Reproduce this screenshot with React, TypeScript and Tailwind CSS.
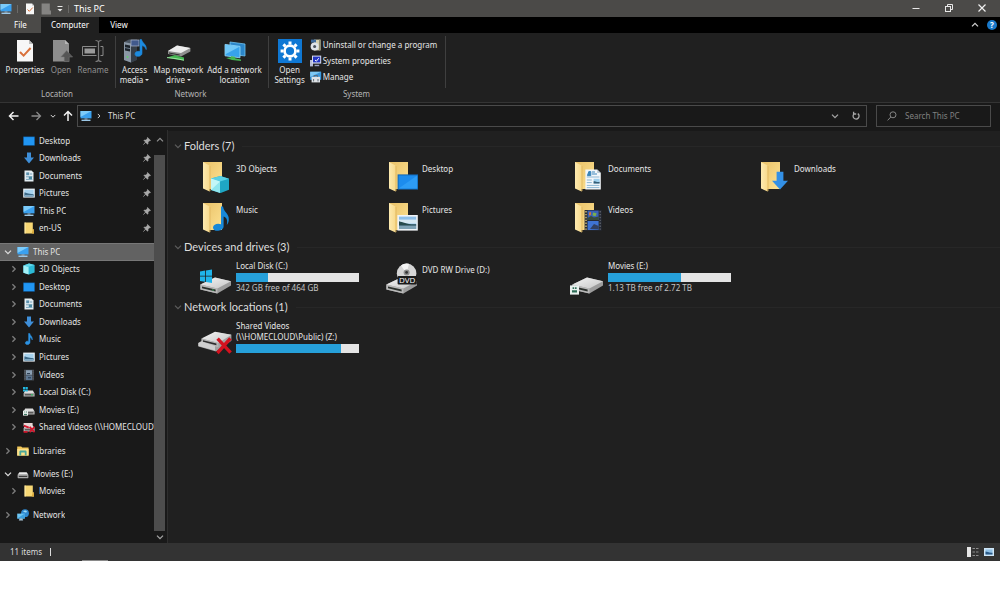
import { useState } from "react";
import type { ReactNode } from "react";
import { clsx } from "clsx";

/* ---------- small icons (12px, used in the tree and the bars) ---------- */

function PcIcon({ className = "h-3 w-3" }: { className?: string }) {
  return (
    <svg viewBox="0 0 12 12" className={className} aria-hidden="true">
      <rect x="0.5" y="1" width="11" height="7.4" fill="#3aa0ee" />
      <path d="M0.5 1h11L0.5 7z" fill="#7ccbfa" />
      <rect x="4.5" y="8.4" width="3" height="1.2" fill="#8fa3b3" />
      <rect x="1.5" y="9.6" width="9" height="1.4" fill="#9cc7e6" />
    </svg>
  );
}

function DesktopIcon() {
  return (
    <svg viewBox="0 0 12 12" className="h-3 w-3" aria-hidden="true">
      <rect x="0.3" y="1.6" width="11.4" height="9" fill="#1173c7" />
      <rect x="0.9" y="2.2" width="10.2" height="7.8" fill="#2196f3" />
    </svg>
  );
}

function DownloadIcon() {
  return (
    <svg viewBox="0 0 12 12" className="h-3 w-3" aria-hidden="true">
      <path d="M4 0.5h4v5h3L6 11.5 1 5.5h3z" fill="#3f8fd9" />
    </svg>
  );
}

function DocumentIcon() {
  return (
    <svg viewBox="0 0 12 12" className="h-3 w-3" aria-hidden="true">
      <path d="M1.5 0.5h7l2 2v9h-9z" fill="#e3edf2" />
      <rect x="3.2" y="2.4" width="3" height="2.8" fill="#5b90ad" />
      <path d="M7 4h2.2M3 6.8h6.4M3 9.4h6.4" stroke="#5b90ad" strokeWidth="0.8" />
      <rect x="5.8" y="6.6" width="3.2" height="2.4" fill="#4c8ba3" />
    </svg>
  );
}

function PictureIcon() {
  return (
    <svg viewBox="0 0 12 12" className="h-3 w-3" aria-hidden="true">
      <rect x="0.2" y="1.6" width="11.6" height="9" fill="#e9f1f6" />
      <rect x="1.4" y="2.8" width="9.2" height="6.6" fill="#a8d3ee" />
      <path d="M1.4 5.6c2 0 3 1.4 9.2 1.6v2.2H1.4z" fill="#3d6a88" />
      <rect x="1.4" y="8" width="9.2" height="1.4" fill="#7fa9c4" />
    </svg>
  );
}

function CubeIcon() {
  return (
    <svg viewBox="0 0 12 12" className="h-3 w-3" aria-hidden="true">
      <path d="M0.4 2.4L6 0.4l5.6 1.6v7.6L6 11.6 0.4 9.8z" fill="#2cb9d6" />
      <path d="M0.4 2.4l5.2 1.4v7.8L0.4 9.8z" fill="#a3f0f7" />
      <path d="M0.4 2.4L6 0.4l5.6 1.6-6 1.8z" fill="#62d7ea" />
    </svg>
  );
}

function MusicIcon() {
  return (
    <svg viewBox="0 0 12 12" className="h-3 w-3" aria-hidden="true">
      <path d="M5.6 0.4h1.2c0.2 2.4 3.2 3 2.4 6.6-0.4-1.6-1.2-2.2-2.2-2.4v4.6c0 3.2-5.2 3-4.6 0.4 0.4-1.4 2-1.8 3.2-1.2z" fill="#2c93e3" stroke="#2c93e3" strokeWidth="0.5" />
    </svg>
  );
}

function VideoIcon() {
  return (
    <svg viewBox="0 0 12 12" className="h-3 w-3" aria-hidden="true">
      <rect x="1" y="0.6" width="10" height="11" fill="#3a3f45" />
      <rect x="3" y="1.2" width="6" height="4.6" fill="#8a9fb3" />
      <rect x="3" y="6.4" width="6" height="4.6" fill="#5d7691" />
      <path d="M2 1.4v10M10 1.4v10" stroke="#8d9297" strokeWidth="0.8" strokeDasharray="1 1" />
      <path d="M4 4.6h3M5 8.8h3" stroke="#24364a" />
    </svg>
  );
}

function FolderIcon() {
  return (
    <svg viewBox="0 0 12 12" className="h-3 w-3" aria-hidden="true">
      <path d="M1.6 0.6h8.2v7h1.2v4H1.6z" fill="#f7d774" />
      <path d="M9.8 7.6H11v4H8.6z" fill="#d9a93c" />
      <path d="M1.6 0.6h1v11h-1z" fill="#fdebaa" />
    </svg>
  );
}

function DiskIcon({ badge }: { badge?: "windows" | "share" | "error" }) {
  return (
    <svg viewBox="0 0 12 12" className="h-3 w-3" aria-hidden="true">
      <path d="M2.2 4.6h7.6l1.8 3H0.6z" fill="#dcdcdc" />
      <rect x="0.6" y="7.2" width="11" height="3.4" rx="0.4" fill="#b5b5b5" />
      <rect x="1.8" y="8.2" width="8.6" height="1.2" fill="#444" />
      {badge === "windows" && (
        <>
          <path d="M0 1h2.2v2H0zM2.6 1h2.2v2H2.6zM0 3.4h2.2v2H0zM2.6 3.4h2.2v2H2.6z" fill="#22b8e0" />
          <rect x="8" y="8.2" width="2" height="1.2" fill="#3cc46a" />
        </>
      )}
      {badge === "share" && (
        <>
          <rect x="0" y="6.6" width="5" height="5" fill="#e8efec" />
          <path d="M1 10.4h3M1.4 8h0.8M3 8h0.8" stroke="#2d6a53" />
        </>
      )}
      {badge === "error" && (
        <>
          <rect x="0.6" y="2" width="9" height="3" fill="#e8d6d6" />
          <path d="M0.8 4.6l5 2M6.6 5.8l5 5.4M11.6 5.8l-5 5.4M0.6 10.8h4" stroke="#d4172d" strokeWidth="1.8" />
        </>
      )}
    </svg>
  );
}

function DriveSmallIcon() {
  return (
    <svg viewBox="0 0 12 12" className="h-3 w-3" aria-hidden="true">
      <path d="M2.4 4.2h7.2l1.8 2.6H0.6z" fill="#ececec" />
      <rect x="0.6" y="6.8" width="10.8" height="3.4" rx="0.6" fill="#a9a9a9" />
      <rect x="1.8" y="7.8" width="8.4" height="1.2" fill="#3d3d3d" />
    </svg>
  );
}

function LibraryIcon() {
  return (
    <svg viewBox="0 0 12 12" className="h-3 w-3" aria-hidden="true">
      <path d="M0.2 1.4h4l1 1h6.4v8.2H0.2z" fill="#f1c75b" />
      <path d="M0.2 4h11.4v6.6H0.2z" fill="#fbe08a" />
      <path d="M2.4 10.6V6.8c0-1 0.6-1.4 1.4-1.4h4.4c0.8 0 1.4 0.4 1.4 1.4v3.8H7.8V7.4H4.2v3.2z" fill="#4aa79a" />
    </svg>
  );
}

function NetworkIcon() {
  return (
    <svg viewBox="0 0 12 12" className="h-3 w-3" aria-hidden="true">
      <circle cx="8" cy="4.2" r="3.9" fill="#2f88cf" />
      <path d="M6 2.4c1.6-1.4 3.4-0.8 4 0.4-0.8 1.2-2 0.4-4-0.4z" fill="#9fdcf6" />
      <rect x="0.2" y="4.6" width="7.6" height="5" fill="#6ec6f3" />
      <path d="M0.2 9.6l7.6-5v5z" fill="#3ba0df" />
      <path d="M2.6 9.6h2.8l0.8 1.8H1.8z" fill="#a9c3d4" />
    </svg>
  );
}

function PinIcon() {
  return (
    <svg viewBox="0 0 10 10" className="h-2 w-2" aria-hidden="true">
      <path d="M5.6 0.4l4 4-1 0.6-0.6-0.2-1.6 1.8v2L5.6 9 3.2 6.8 0.4 9.6 3 6.4 1 4.2l0.6-0.6h2l1.8-1.6-0.2-0.8z" fill="#a9a9a9" stroke="#a9a9a9" strokeWidth="0.5" />
    </svg>
  );
}

type Direction = "right" | "down" | "up";

function Chevron({ dir, className }: { dir: Direction; className?: string }) {
  const paths = {
    right: "M2.4 1.2L5.2 4 2.4 6.8",
    down: "M1 2.6L4 5.6 7 2.6",
    up: "M1 5.4L4 2.4 7 5.4",
  };
  return (
    <svg viewBox="0 0 8 8" className={clsx("shrink-0", className)} aria-hidden="true">
      <path d={paths[dir]} fill="none" stroke="currentColor" strokeWidth="1.3" />
    </svg>
  );
}

/* ---------- large icons (34px tiles) ---------- */

function BigIcon({ children }: { children: ReactNode }) {
  return (
    <svg viewBox="0 0 34 34" className="mt-[3px] h-[34px] w-[34px] shrink-0" aria-hidden="true">
      <defs>
        <linearGradient id="folderBack" x1="0" x2="1" y1="0" y2="1">
          <stop offset="0" stopColor="#e9c168" />
          <stop offset="1" stopColor="#fde292" />
        </linearGradient>
        <linearGradient id="folderFlap" x1="0" x2="1" y1="0" y2="0">
          <stop offset="0" stopColor="#fdeab0" />
          <stop offset="1" stopColor="#f8da8c" />
        </linearGradient>
        <linearGradient id="driveTop" x1="0" x2="1" y1="0" y2="1">
          <stop offset="0" stopColor="#f4f4f4" />
          <stop offset="1" stopColor="#c6c6c6" />
        </linearGradient>
      </defs>
      {children}
    </svg>
  );
}

function BigFolder({ children }: { children: ReactNode }) {
  return (
    <BigIcon>
      <path d="M5 2h19v27H9z" fill="url(#folderBack)" />
      <path d="M5 2l6.600 3.600V31.600L5 28.400z" fill="url(#folderFlap)" />
      <path d="M11.600 5.600v26l0.800-0.600V6.200z" fill="#dfb45c" />
      {children}
    </BigIcon>
  );
}

const bigObjects = (
  <BigFolder>
    <path d="M13 18.4L22.4 16l8.6 2.8v11L22.6 33 13 30z" fill="#1fa6c4" />
    <path d="M13 18.4L22.4 16l8.6 2.8-9 2.6z" fill="#58cfe4" />
    <path d="M13 18.4l9 3V33l-9-3z" fill="#8fe6ee" />
    <path d="M13 18.4l9 3L13 30z" fill="#c3f6f7" />
  </BigFolder>
);

const bigDesktop = (
  <BigFolder>
    <rect x="13.6" y="14.4" width="20.4" height="15.2" fill="#1468b3" />
    <rect x="14.6" y="15.4" width="18.6" height="13.2" fill="#1c8cee" />
    <path d="M14.6 28.6L33.2 15.4v13.2z" fill="#2d9cf5" />
  </BigFolder>
);

const bigDocuments = (
  <BigFolder>
    <path d="M15.4 9.4h11.8l3.6 3.6v16.6H15.4z" fill="#f3f7fa" />
    <path d="M27.2 9.4v3.6h3.6z" fill="#b9c8d2" />
    <path d="M17.4 15.6l1.4-4h2v4zM22 12h3M22 14h5" stroke="#3a85bb" strokeWidth="1" fill="#3a85bb" />
    <path d="M16.8 17h12.6M16.8 27.6h12.6M16.8 25.4h12.6M16.8 20h5M16.8 22.6h5" stroke="#8db7d3" strokeWidth="1" />
    <rect x="23.6" y="18.8" width="6" height="4.8" fill="#9ed0ee" />
    <path d="M23.6 21.4c2-1 3 1.4 6 0.4v1.8h-6z" fill="#345d75" />
  </BigFolder>
);

const bigDownloads = (
  <BigFolder>
    <path d="M20.6 11.8h6.8v9H32L24 29.6l-8-8.8h4.6z" fill="#3390e6" />
  </BigFolder>
);

const bigMusic = (
  <BigFolder>
    <path d="M23 5.6h2c0.8 6 6.4 6.8 5.8 13.6-0.2 2.2-1 3.6-2 4.8 1.4-6.4-1.4-7.6-3.2-8.4v10c0 2-2 4-5.4 4.2-3 0.2-5.4-1-5.2-3.6 0.4-3 4.6-4.4 8-3z" fill="#1788d8" />
  </BigFolder>
);

const bigPictures = (
  <BigFolder>
    <rect x="13.4" y="14" width="20.4" height="15.6" fill="#f0f4f7" />
    <rect x="15" y="15.6" width="17.2" height="12.4" fill="#8ebfe8" />
    <rect x="15" y="18.6" width="17.2" height="4" fill="#d7e8f2" />
    <path d="M15 20.2c4 1 8 3.4 17.2 3v1.6H15z" fill="#274a4d" />
    <rect x="15" y="24.8" width="17.2" height="3.2" fill="#7fa2b5" />
  </BigFolder>
);

const bigVideos = (
  <BigFolder>
    <rect x="14.6" y="9" width="17" height="20.6" fill="#252a35" />
    <rect x="17.6" y="9.6" width="11" height="9.4" fill="#3a62b5" />
    <rect x="17.6" y="20" width="11" height="9" fill="#3f73d4" />
    <path d="M17.6 17l3.4-2 3 1.4 4.6-1v3.6h-11z" fill="#384a3a" />
    <path d="M23 11.4l3.6 0.8-1 3-3-0.6z" fill="#79b04b" />
    <path d="M19 11.6l2-0.6v3l-2 0.4z" fill="#d5723b" />
    <path d="M20 28l4-5 4.6 2v3.6z" fill="#324062" />
    <path d="M16 10v19.6" stroke="#d9c074" strokeWidth="1.4" strokeDasharray="1.4 1.5" />
    <path d="M30.2 10v19.6" stroke="#5d6068" strokeWidth="1.4" strokeDasharray="1.4 1.5" />
  </BigFolder>
);

function DriveBody() {
  return (
    <>
      <path d="M2.4 23.6L17 16.4l16 3.8v4.4l-13.6 7.8-17-3.8z" fill="#9c9c9c" />
      <path d="M2.4 23.6L17 16.4l16 3.8-13.6 7.4z" fill="url(#driveTop)" />
      <path d="M2.4 23.6l17 4v4.8l-17-3.8z" fill="#b9b9b9" />
      <path d="M4 25.4l13.6 3.2v1.8L4 27.2z" fill="#2b302c" />
    </>
  );
}

const bigLocalDisk = (
  <BigIcon>
    <DriveBody />
    <path d="M14 28.4l2 0.4v0.8l-2-0.4z" fill="#48c26d" />
    <path d="M2 10.4l5.2-0.8v5.2H2zM8 9.4l6-1v6.4H8zM2 15.6h5.2v5.2L2 20zM8 15.6h6V22l-6-1z" fill="#1fb4ea" />
  </BigIcon>
);

const bigDvd = (
  <BigIcon>
    <DriveBody />
    <circle cx="22.6" cy="12.4" r="9.8" fill="#d6d6d6" />
    <path d="M22.6 12.4L17 4.4a9.8 9.8 0 0 1 8-1.6z" fill="#f5f5f5" />
    <circle cx="22.6" cy="11.4" r="3" fill="#8d8d8d" />
    <circle cx="22.6" cy="11.4" r="1.4" fill="#333" />
    <rect x="13.6" y="15" width="19.2" height="8.4" rx="1" fill="#1b1b1b" />
    <text x="23.2" y="22" textAnchor="middle" fontSize="8" fontFamily="Open Sans, sans-serif" fill="#fff">
      DVD
    </text>
  </BigIcon>
);

const bigMovies = (
  <BigIcon>
    <DriveBody />
    <rect x="0" y="24.4" width="9" height="9.2" fill="#e9f0ee" />
    <path d="M2 31.4v-2.2h5v2.2zM2.6 26.2h1.6v1.8H2.6zM5 26.2h1.6v1.8H5z" fill="#2e6d57" />
  </BigIcon>
);

const bigNetworkDrive = (
  <BigIcon>
    <path d="M0.4 22L17 11l16.4 2.8v6L18 30.6 0.4 25.6z" fill="#a2a2a2" />
    <path d="M3.4 17.6L17 10.8l16.4 3-13 8.2z" fill="url(#driveTop)" />
    <path d="M3.4 17.6l17 4.4v4.2l-17-4.4z" fill="#b6b6b6" />
    <path d="M5 19.2l13.4 3.4v1.6L5 20.8z" fill="#2c2c2c" />
    <path d="M0.4 22l3-1.4L17 25v4.4L0.4 25z" fill="#cfcfcf" />
    <path d="M19.6 17.6l13 14M32.4 17.4L19.4 32" stroke="#d3121f" strokeWidth="3.4" />
  </BigIcon>
);

/* ---------- ribbon icons ---------- */

const ribbonIcon = "h-6 w-6";

function PropertiesIcon({ className = ribbonIcon }: { className?: string }) {
  return (
    <svg viewBox="0 0 24 24" className={className} aria-hidden="true">
      <path d="M4 1h12l4 4v17.6H4z" fill="#f7f7f7" />
      <path d="M16 1v4h4z" fill="#bcbcbc" />
      <path d="M7 13l3.6 3.6L17.6 9" fill="none" stroke="#d9713b" strokeWidth="2" />
    </svg>
  );
}

const openIcon = (
  <svg viewBox="0 0 24 24" className={ribbonIcon} aria-hidden="true">
    <path d="M4 1h12l4 4v17.6H4z" fill="#8d8d8d" />
    <path d="M16 1v4h4z" fill="#b5b5b5" />
    <path d="M17.6 11.6l6 6.4h-3.4v4.6h-5V18h-3.4z" fill="#555" stroke="#7a7a7a" strokeWidth="0.5" />
  </svg>
);

const renameIcon = (
  <svg viewBox="0 0 24 24" className={ribbonIcon} aria-hidden="true">
    <path d="M1.500 7.500h20.500v9H1.500z" stroke="#8a8a8a" fill="none" />
    <rect x="3.500" y="9.500" width="10.500" height="5" fill="#9a9a9a" />
    <path d="M15.500 7h4v10h-4z" fill="#202020" />
    <path d="M17.500 3v18M14.500 1.500c2 0 3 0.500 3 2 0-1.500 1-2 3-2M14.500 22.500c2 0 3-0.500 3-2 0 1.500 1 2 3 2" stroke="#7b7b7b" strokeWidth="1.200" fill="none" />
  </svg>
);

const mediaIcon = (
  <svg viewBox="0 0 24 24" className={ribbonIcon} aria-hidden="true">
    <path d="M1 3l5-2.400h8v20L8 23.600 1 21z" fill="#4b5663" />
    <path d="M1 3l7 1.600v19L1 21z" fill="#8b98a6" />
    <path d="M2 5.600l5 1v6l-5-1z" fill="#1c232b" />
    <path d="M2 8.600l5 1" stroke="#6b7a89" />
    <path d="M8 4.600L14 1v20l-6 2.600z" fill="#353e49" />
    <circle cx="4.500" cy="18" r="1" fill="#5fd06d" />
    <rect x="8" y="1" width="8" height="6" fill="#41598c" stroke="#a9b3c8" strokeWidth="0.700" />
    <path d="M17 0.600h1.600c0.600 3.600 5.400 5 4.600 10-0.800-2.600-2.400-3.600-4.200-4v7.600c0 4-7.400 4.200-7 0.600 0.200-2.200 2.800-3 5-2.200z" fill="#1c8be0" stroke="#1c8be0" strokeWidth="0.600" />
  </svg>
);

const mapDriveIcon = (
  <svg viewBox="0 0 24 24" className={ribbonIcon} aria-hidden="true">
    <path d="M1 12l9-5.400L23.400 9v3.600L14 17.400 1 15z" fill="#8f8f8f" />
    <path d="M1 12l9-5.400L23.400 9 14 14z" fill="#ececec" />
    <path d="M2 13.400l10.600 2v1L2 14.400z" fill="#2d2d2d" />
    <path d="M0 18.400l8-2.400 3 1 6 1.600v2.800L9 20.400z" fill="#45b552" />
    <path d="M0 18.600l9 1 8 1.600" stroke="#9be39f" fill="none" />
  </svg>
);

const addLocationIcon = (
  <svg viewBox="0 0 24 24" className={ribbonIcon} aria-hidden="true">
    <path d="M7 3l15 2v12L7 15z" fill="#2b86c9" stroke="#6fc2f0" strokeWidth="0.800" />
    <path d="M2 5.400l15 2v11.400l-15-2z" fill="#37a3ec" stroke="#9adcfb" strokeWidth="0.800" />
    <path d="M2 5.400l15 2-15 8z" fill="#71c8f8" />
    <path d="M3 19l5-0.800v-1l4 0.600v1.400l6 1.400v1.400L9 21z" fill="#45b552" />
  </svg>
);

const settingsIcon = (
  <svg viewBox="0 0 24 24" className={ribbonIcon} aria-hidden="true">
    <rect width="24" height="24" fill="#0f78d4" />
    <circle cx="12" cy="12" r="5.400" fill="none" stroke="#fff" strokeWidth="2.600" />
    <g stroke="#fff" strokeWidth="3">
      <path d="M12 2.600v3M12 18.400v3M2.600 12h3M18.400 12h3" />
      <path d="M5.400 5.400l2 2M16.600 16.600l2 2M5.400 18.600l2-2M16.600 7.400l2-2" />
    </g>
  </svg>
);

const uninstallIcon = (
  <svg viewBox="0 0 12 12" className="h-3 w-3" aria-hidden="true">
    <path d="M4 0.600h6v10.800H4z" fill="#d3cfae" />
    <path d="M9 0.600h2v10.800H9z" fill="#8c8a72" />
    <rect x="1" y="0.600" width="5" height="3" fill="#3c6a9c" />
    <circle cx="4.600" cy="7.400" r="4" fill="#dfe4e8" />
    <circle cx="4.600" cy="7.400" r="1.500" fill="#48525c" />
  </svg>
);

const systemIcon = (
  <svg viewBox="0 0 12 12" className="h-3 w-3" aria-hidden="true">
    <path d="M0 5h3v6.400H0z" fill="#b7bdd8" />
    <path d="M2 0.600h9.200v8H2z" fill="#d6dbee" />
    <rect x="3" y="1.600" width="7.200" height="5.800" fill="#2435c2" />
    <path d="M5 5l1.400 1.200 2.400-3" stroke="#fff" fill="none" />
    <path d="M4.600 9.800h4.600v1.400H4.600z" fill="#9aa2c4" />
  </svg>
);

const manageIcon = (
  <svg viewBox="0 0 12 12" className="h-3 w-3" aria-hidden="true">
    <rect x="0.200" y="0.800" width="11" height="8" fill="#3a97dc" />
    <path d="M0.200 0.800h11L0.200 6z" fill="#7ec9f5" />
    <rect x="1.600" y="5.800" width="8.400" height="5.600" fill="#dfe3e6" />
    <path d="M4 5.800V4.600h3.600v1.200M3.600 8v2.400M8 8v2.400" stroke="#5e6b76" fill="none" />
  </svg>
);

/* ---------- data ---------- */

interface TreeItem {
  label: string;
  icon: ReactNode;
  level?: number;
  open?: boolean;
  selected?: boolean;
}

const quickAccess: TreeItem[] = [
  { label: "Desktop", icon: <DesktopIcon /> },
  { label: "Downloads", icon: <DownloadIcon /> },
  { label: "Documents", icon: <DocumentIcon /> },
  { label: "Pictures", icon: <PictureIcon /> },
  { label: "This PC", icon: <PcIcon /> },
  { label: "en-US", icon: <FolderIcon /> },
];

const thisPc: TreeItem[] = [
  { label: "This PC", icon: <PcIcon />, open: true, selected: true },
  { label: "3D Objects", icon: <CubeIcon />, level: 1 },
  { label: "Desktop", icon: <DesktopIcon />, level: 1 },
  { label: "Documents", icon: <DocumentIcon />, level: 1 },
  { label: "Downloads", icon: <DownloadIcon />, level: 1 },
  { label: "Music", icon: <MusicIcon />, level: 1 },
  { label: "Pictures", icon: <PictureIcon />, level: 1 },
  { label: "Videos", icon: <VideoIcon />, level: 1 },
  { label: "Local Disk (C:)", icon: <DiskIcon badge="windows" />, level: 1 },
  { label: "Movies (E:)", icon: <DiskIcon badge="share" />, level: 1 },
  { label: "Shared Videos (\\\\HOMECLOUD\\Public) (Z:)", icon: <DiskIcon badge="error" />, level: 1 },
];

const libraries: TreeItem[] = [{ label: "Libraries", icon: <LibraryIcon /> }];

const moviesDrive: TreeItem[] = [
  { label: "Movies (E:)", icon: <DriveSmallIcon />, open: true },
  { label: "Movies", icon: <FolderIcon />, level: 1 },
];

const network: TreeItem[] = [{ label: "Network", icon: <NetworkIcon /> }];

const folders = [
  { name: "3D Objects", icon: bigObjects },
  { name: "Desktop", icon: bigDesktop },
  { name: "Documents", icon: bigDocuments },
  { name: "Downloads", icon: bigDownloads },
  { name: "Music", icon: bigMusic },
  { name: "Pictures", icon: bigPictures },
  { name: "Videos", icon: bigVideos },
];

/* ---------- title bar, tabs, ribbon ---------- */

function TitleBar() {
  return (
    <header className="flex h-[17px] items-center bg-[#4b4a48] text-white">
      <PcIcon className="h-3 w-3" />
      <span className="ml-[5px] h-2 w-px bg-[#6b6a68]" />
      <button aria-label="Properties" className="ml-[6px]">
        <PropertiesIcon className="h-3 w-3" />
      </button>
      <button aria-label="New folder" className="ml-1">
        <svg viewBox="0 0 12 12" className="h-3 w-3" aria-hidden="true">
          <path d="M1.600 0.600h8.200v7h1.200v4H1.600z" fill="#858482" />
        </svg>
      </button>
      <button aria-label="Customize Quick Access Toolbar" className="ml-1">
        <svg viewBox="0 0 8 8" className="h-2 w-2" aria-hidden="true">
          <path d="M1.500 1.500h5" stroke="#e8e8e8" />
          <path d="M1.500 4h5L4 6.500z" fill="#e8e8e8" />
        </svg>
      </button>
      <span className="ml-1 h-2 w-px bg-[#6b6a68]" />
      <h1 className="ml-[5px] text-[9px]">This PC</h1>
      <div className="ml-auto flex items-center gap-[21px] pr-3">
        <button aria-label="Minimize" className="h-3 w-3">
          <svg viewBox="0 0 12 12">
            <path d="M2.500 5.500h7" stroke="#e8e8e8" />
          </svg>
        </button>
        <button aria-label="Restore" className="h-3 w-3">
          <svg viewBox="0 0 12 12" fill="none" stroke="#e8e8e8">
            <rect x="2.500" y="3.500" width="5" height="5" />
            <path d="M4.500 3V1.500h5v5H8" />
          </svg>
        </button>
        <button aria-label="Close" className="h-3 w-3">
          <svg viewBox="0 0 12 12">
            <path d="M2.500 1.500l7 7M9.500 1.500l-7 7" stroke="#f0f0f0" strokeWidth="1.200" />
          </svg>
        </button>
      </div>
    </header>
  );
}

function Tabs() {
  return (
    <div className="flex h-4 items-stretch bg-black text-white">
      <button className="w-[41px] bg-[#4b4a48]">File</button>
      <button className="w-[58px] bg-[#202020]">Computer</button>
      <button className="w-10">View</button>
      <div className="ml-auto flex items-center gap-2 pr-[3px]">
        <button aria-label="Minimize the Ribbon">
          <Chevron dir="up" className="h-2 w-2 text-[#d0d0d0]" />
        </button>
        <button aria-label="Help" className="h-[10px] w-[10px] rounded-full bg-[#1979ca] leading-[10px] font-bold">
          ?
        </button>
      </div>
    </div>
  );
}

interface RibbonButtonProps {
  icon: ReactNode;
  label: string;
  second?: string;
  menu?: boolean;
  disabled?: boolean;
  className?: string;
}

function RibbonButton({ icon, label, second, menu, disabled, className }: RibbonButtonProps) {
  return (
    <button
      disabled={disabled}
      className={clsx("mt-[3px] flex flex-col items-center leading-[10px] whitespace-nowrap", disabled ? "text-[#909090]" : "text-[#e6e6e6]", className)}
    >
      {icon}
      <span className="mt-[2px]">{label}</span>
      {second && (
        <span className="flex items-center gap-[2px]">
          {second}
          {menu && (
            <svg viewBox="0 0 4 4" className="h-1 w-1" aria-hidden="true">
              <path d="M0 1h4L2 3z" fill="currentColor" />
            </svg>
          )}
        </span>
      )}
    </button>
  );
}

function RibbonGroup({ title, className, children }: { title: string; className?: string; children: ReactNode }) {
  return (
    <section className={clsx("relative flex flex-col items-center justify-between", className)}>
      <div className="flex items-start">{children}</div>
      <h2 className="leading-[12px] text-[#b4b4b4]">{title}</h2>
      <span className="absolute top-0 right-0 h-[52px] w-px bg-[#3f3f3f]" />
    </section>
  );
}

function Ribbon() {
  const systemLinks = [
    { label: "Uninstall or change a program", icon: uninstallIcon },
    { label: "System properties", icon: systemIcon },
    { label: "Manage", icon: manageIcon },
  ];
  return (
    <div className="flex h-[70px] border-b border-[#343434] bg-[#202020] pt-[3px] pb-[2px]">
      <RibbonGroup title="Location" className="w-[116px] pr-[2px]">
        <RibbonButton icon={<PropertiesIcon />} label="Properties" className="w-10" />
        <RibbonButton icon={openIcon} label="Open" disabled className="w-8" />
        <RibbonButton icon={renameIcon} label="Rename" disabled className="w-8" />
      </RibbonGroup>
      <RibbonGroup title="Network" className="w-[153px] pr-1">
        <RibbonButton icon={mediaIcon} label="Access" second="media" menu className="w-8" />
        <RibbonButton icon={mapDriveIcon} label="Map network" second="drive" menu className="w-14" />
        <RibbonButton icon={addLocationIcon} label="Add a network" second="location" className="w-14" />
      </RibbonGroup>
      <RibbonGroup title="System" className="w-[177px] pr-[2px]">
        <RibbonButton icon={settingsIcon} label="Open" second="Settings" className="w-9" />
        <ul className="mt-[1px] pr-1 pl-[2px]">
          {systemLinks.map((link) => (
            <li key={link.label}>
              <button className="flex h-4 items-center gap-[1px] whitespace-nowrap text-[#e6e6e6]">
                {link.icon}
                {link.label}
              </button>
            </li>
          ))}
        </ul>
      </RibbonGroup>
    </div>
  );
}

/* ---------- address bar ---------- */

function AddressBar() {
  const [query, setQuery] = useState("");
  return (
    <div className="flex items-center bg-[#191919] pt-[2px] pb-[3px] pr-[9px] pl-2 text-[#dcdcdc]">
      <button aria-label="Back" className="h-3 w-3">
        <svg viewBox="0 0 12 12" fill="none" stroke="#f2f2f2" strokeWidth="1.500">
          <path d="M10.500 6h-9M5.500 2L1.500 6l4 4" />
        </svg>
      </button>
      <button aria-label="Forward" className="ml-[10px] h-3 w-3">
        <svg viewBox="0 0 12 12" fill="none" stroke="#8a8a8a" strokeWidth="1.300">
          <path d="M1.500 6h9M6.500 2l4 4-4 4" />
        </svg>
      </button>
      <button aria-label="Recent locations" className="ml-2">
        <Chevron dir="down" className="h-[6px] w-[6px]" />
      </button>
      <button aria-label="Up" className="ml-[6px] h-3 w-3">
        <svg viewBox="0 0 12 12" fill="none" stroke="#f2f2f2" strokeWidth="1.500">
          <path d="M6 11V2M2 5.500L6 1.500l4 4" />
        </svg>
      </button>
      <div className="ml-[3px] flex h-[22px] flex-1 items-center border border-[#4a4a4a] pl-[2px]">
        <PcIcon />
        <Chevron dir="right" className="mx-1 h-[6px] w-[6px]" />
        <a href="#this-pc" className="ml-[2px]">
          This PC
        </a>
        <button aria-label="Previous locations" className="mr-3 ml-auto">
          <Chevron dir="down" className="h-2 w-2 text-[#a5a5a5]" />
        </button>
        <button aria-label="Refresh" className="mr-[5px]">
          <svg viewBox="0 0 10 10" className="h-[10px] w-[10px]" fill="none" stroke="#a8a8a8" strokeWidth="1.300">
            <path d="M6.800 2.600A3 3 0 1 1 3.200 2.700M2.600 0.800v2.200h2.600" />
          </svg>
        </button>
      </div>
      <label className="ml-[9px] flex h-[22px] w-[115px] items-center gap-2 border border-[#4a4a4a] pl-[10px]">
        <svg viewBox="0 0 10 10" className="h-[10px] w-[10px] shrink-0" fill="none" stroke="#858585" aria-hidden="true">
          <circle cx="6" cy="3.800" r="3" />
          <path d="M3.800 6L0.600 9.400" />
        </svg>
        <input
          aria-label="Search This PC"
          placeholder="Search This PC"
          value={query}
          onChange={(e) => setQuery(e.target.value)}
          className="w-full min-w-0 bg-transparent outline-none placeholder:text-[#808080]"
        />
      </label>
    </div>
  );
}

/* ---------- navigation pane ---------- */

function TreeRow({ item, pinned }: { item: TreeItem; pinned?: boolean }) {
  const nested = item.level === 1 || pinned;
  return (
    <li className={clsx("min-h-0 border-y", item.selected ? "border-[#777] bg-[#626262]" : "border-transparent")}>
      <a href="#" className={clsx("flex h-full items-center", nested ? "pl-[10px]" : "pl-1")}>
        {pinned ? (
          <span className="w-2 shrink-0" />
        ) : (
          <Chevron dir={item.open ? "down" : "right"} className={clsx("h-2 w-2", item.open ? "text-[#dcdcdc]" : "text-[#7d7d7d]")} />
        )}
        <span className="ml-[5px] shrink-0">{item.icon}</span>
        <span className="ml-1 overflow-hidden whitespace-nowrap">{item.label}</span>
        {pinned && (
          <span className="mr-[3px] ml-auto">
            <PinIcon />
          </span>
        )}
      </a>
    </li>
  );
}

function Tree({ items, pinned, className }: { items: TreeItem[]; pinned?: boolean; className?: string }) {
  return (
    <ul className={clsx("grid auto-rows-fr grid-cols-1", className)}>
      {items.map((item) => (
        <TreeRow key={item.label} item={item} pinned={pinned} />
      ))}
    </ul>
  );
}

function NavigationPane() {
  return (
    <div className="flex w-[168px] shrink-0 border-r border-[#2e2e2e] bg-[#191919]">
      <nav aria-label="Navigation pane" className="flex min-w-0 flex-1 flex-col gap-[6px] pt-[2px] pb-5 text-[#e4e4e4]">
        <Tree items={quickAccess} pinned className="h-[105px]" />
        <Tree items={thisPc} className="h-[193px]" />
        <Tree items={libraries} className="h-[17px]" />
        <Tree items={moviesDrive} className="h-[35px]" />
        <Tree items={network} className="h-[17px]" />
      </nav>
      <div className="mr-[2px] flex w-[11px] flex-col items-center">
        <button aria-label="Scroll up" className="flex h-[25px] items-center pb-[6px]">
          <Chevron dir="up" className="h-2 w-2 text-[#8f8f8f]" />
        </button>
        <div className="w-full flex-1 bg-[#4d4d4d]" />
        <button aria-label="Scroll down" className="flex h-3 items-center">
          <Chevron dir="down" className="h-2 w-2 text-[#a5a5a5]" />
        </button>
      </div>
    </div>
  );
}

/* ---------- content ---------- */

function Section({ title, children }: { title: string; children: ReactNode }) {
  const [open, setOpen] = useState(true);
  return (
    <section>
      <h2 className="flex h-4 items-center font-['Lato','Noto_Sans',sans-serif] text-[11px] text-[#dedede]">
        <button onClick={() => setOpen(!open)} className="flex items-center gap-[2px] whitespace-nowrap">
          <Chevron dir={open ? "down" : "right"} className="h-2 w-2 text-[#5c5c5c]" />
          {title}
        </button>
        <span className="ml-2 h-px flex-1 bg-[#272727]" />
      </h2>
      {open && <div className="mt-[3px] grid grid-cols-[repeat(auto-fill,186px)] pl-6">{children}</div>}
    </section>
  );
}

interface TileProps {
  icon: ReactNode;
  name: string;
  path?: string;
  used?: number;
  free?: string;
  className?: string;
}

function Tile({ icon, name, path, used, free, className = "pt-[2px]" }: TileProps) {
  return (
    <a href="#" className="flex h-[41px] gap-1">
      {icon}
      <div className={clsx("w-[123px] leading-[11px]", className)}>
        <p className="whitespace-nowrap text-[#e6e6e6]">{name}</p>
        {path && <p className="whitespace-nowrap text-[#e6e6e6]">{path}</p>}
        {used !== undefined && (
          <div className="mt-[2px] h-[9px] bg-[#e4e4e4]">
            <div className="h-full bg-[#26a0da]" style={{ width: `${used}%` }} />
          </div>
        )}
        {free && <p className="whitespace-nowrap text-[#c4c4c4]">{free}</p>}
      </div>
    </a>
  );
}

function Content() {
  return (
    <main className="min-w-0 flex-1 border-t border-[#191919] bg-[#202020] pt-[7px] pl-[6px]">
      <Section title="Folders (7)">
        {folders.map((folder) => (
          <Tile key={folder.name} icon={folder.icon} name={folder.name} className="pt-[6px]" />
        ))}
      </Section>
      <Section title="Devices and drives (3)">
        <Tile icon={bigLocalDisk} name="Local Disk (C:)" used={26} free="342 GB free of 464 GB" />
        <Tile icon={bigDvd} name="DVD RW Drive (D:)" className="pt-[6px]" />
        <Tile icon={bigMovies} name="Movies (E:)" used={59} free="1.13 TB free of 2.72 TB" />
      </Section>
      <Section title="Network locations (1)">
        <Tile icon={bigNetworkDrive} name="Shared Videos" path="(\\HOMECLOUD\Public) (Z:)" used={85} />
      </Section>
    </main>
  );
}

function StatusBar() {
  return (
    <footer className="relative flex h-[18px] items-center bg-[#333] pr-[6px] pl-[10px] text-[#dcdcdc]">
      <span>11 items</span>
      <span className="ml-2 h-2 w-px bg-[#dcdcdc]" />
      <span className="absolute bottom-0 left-[82px] h-px w-[26px] bg-[#8a8a8a]" />
      <button aria-label="Details view" className="ml-auto">
        <svg viewBox="0 0 12 10" className="h-[10px] w-3" aria-hidden="true">
          <rect x="0" y="0" width="4" height="10" fill="#e6e6e6" />
          <path d="M5.500 1.500h6M5.500 5h6M5.500 8.500h6" stroke="#8d8d8d" strokeDasharray="2.500 1" />
        </svg>
      </button>
      <button aria-label="Large icons view" className="ml-[5px]">
        <svg viewBox="0 0 10 8" className="h-2 w-[10px]" aria-hidden="true">
          <rect width="10" height="8" fill="#cfe6f7" />
          <rect x="1.500" y="1.500" width="7" height="5" fill="#8fc0e6" />
          <path d="M1.500 3.500c2 0 3 1.500 7 1.200v1.800h-7z" fill="#2a5a88" />
        </svg>
      </button>
    </footer>
  );
}

export default function App() {
  return (
    <div className="min-h-screen bg-white font-['Noto_Sans','Open_Sans',sans-serif] text-[8px] leading-[12px]">
      <TitleBar />
      <Tabs />
      <Ribbon />
      <AddressBar />
      <div className="flex">
        <NavigationPane />
        <Content />
      </div>
      <StatusBar />
    </div>
  );
}
